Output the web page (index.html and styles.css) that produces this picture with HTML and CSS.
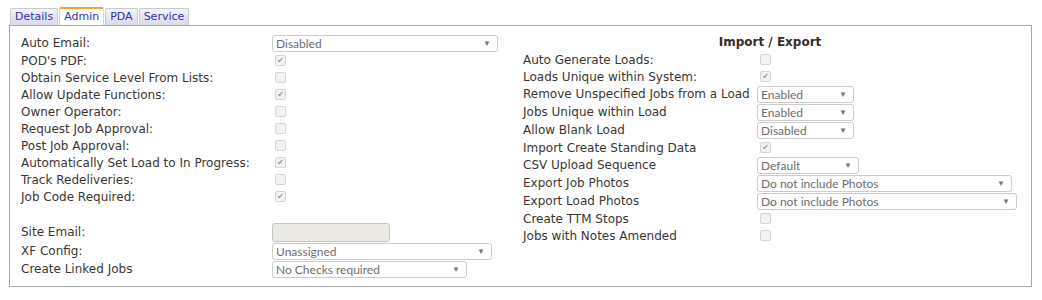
FILE: index.html
```html
<!DOCTYPE html>
<html lang="en">
<head>
  <meta charset="UTF-8" />
  <title>Admin Settings</title>
  <link rel="stylesheet" href="styles.css">
</head>
<body>
  <div class="tabs">
    <div class="tab">Details</div>
    <div class="tab active">Admin</div>
    <div class="tab">PDA</div>
    <div class="tab">Service</div>
  </div>
  <div class="panel">
    <div class="col left">
      <div class="row sel"><span class="label">Auto Email:</span><div class="select w224">Disabled<span class="arrow">&#9660;</span></div></div>
      <div class="row"><span class="label">POD's PDF:</span><span class="check on">&#10004;</span></div>
      <div class="row"><span class="label">Obtain Service Level From Lists:</span><span class="check"></span></div>
      <div class="row"><span class="label">Allow Update Functions:</span><span class="check on">&#10004;</span></div>
      <div class="row"><span class="label">Owner Operator:</span><span class="check"></span></div>
      <div class="row"><span class="label">Request Job Approval:</span><span class="check"></span></div>
      <div class="row"><span class="label">Post Job Approval:</span><span class="check"></span></div>
      <div class="row"><span class="label">Automatically Set Load to In Progress:</span><span class="check on">&#10004;</span></div>
      <div class="row"><span class="label">Track Redeliveries:</span><span class="check"></span></div>
      <div class="row"><span class="label">Job Code Required:</span><span class="check on">&#10004;</span></div>
      <div class="row"></div>
      <div class="row field"><span class="label">Site Email:</span><div class="textbox"></div></div>
      <div class="row sel"><span class="label">XF Config:</span><div class="select w218">Unassigned<span class="arrow">&#9660;</span></div></div>
      <div class="row sel"><span class="label">Create Linked Jobs</span><div class="select w193">No Checks required<span class="arrow">&#9660;</span></div></div>
    </div>
    <div class="col right">
      <h3 class="heading">Import / Export</h3>
      <div class="row"><span class="label">Auto Generate Loads:</span><span class="check"></span></div>
      <div class="row"><span class="label">Loads Unique within System:</span><span class="check on">&#10004;</span></div>
      <div class="row sel"><span class="label">Remove Unspecified Jobs from a Load</span><div class="select w95">Enabled<span class="arrow">&#9660;</span></div></div>
      <div class="row sel"><span class="label">Jobs Unique within Load</span><div class="select w95">Enabled<span class="arrow">&#9660;</span></div></div>
      <div class="row sel"><span class="label">Allow Blank Load</span><div class="select w95">Disabled<span class="arrow">&#9660;</span></div></div>
      <div class="row"><span class="label">Import Create Standing Data</span><span class="check on">&#10004;</span></div>
      <div class="row sel"><span class="label">CSV Upload Sequence</span><div class="select w100">Default<span class="arrow">&#9660;</span></div></div>
      <div class="row sel"><span class="label">Export Job Photos</span><div class="select w253">Do not include Photos<span class="arrow">&#9660;</span></div></div>
      <div class="row sel"><span class="label">Export Load Photos</span><div class="select w259">Do not include Photos<span class="arrow">&#9660;</span></div></div>
      <div class="row"><span class="label">Create TTM Stops</span><span class="check"></span></div>
      <div class="row"><span class="label">Jobs with Notes Amended</span><span class="check"></span></div>
    </div>
  </div>
</body>
</html>
```

FILE: styles.css
```css
body {
  margin: 0;
  padding: 7px 10px 0 9px;
  font-family: "DejaVu Sans", Verdana, sans-serif;
  font-size: 12px;
  color: #3a3632;
  background: #ffffff;
}

.tabs {
  display: flex;
  padding-left: 1px;
  height: 18px;
  align-items: flex-end;
}

.tab {
  height: 16px;
  line-height: 16px;
  padding: 0 4px;
  margin-right: 1px;
  border: 1px solid #c9c9d6;
  border-bottom: none;
  border-radius: 2px 2px 0 0;
  background: linear-gradient(#f4f4fa, #d9d9ea);
  color: #3030b8;
  font-size: 11px;
}

.tab.active {
  height: 16px;
  background: #ffffff;
  border-top: 2px solid #f0a830;
  border-color: #d6d6d6;
  border-top-color: #f0a830;
}

.panel {
  display: flex;
  border: 1px solid #a8a8a8;
  height: 262px;
  padding: 8px 0 0 11px;
  box-sizing: border-box;
  width: 1023px;
}

.col {
  display: flex;
  flex-direction: column;
}

.left {
  width: 502px;
}

.right {
  width: 494px;
}

.left .label {
  width: 251px;
}

.right .label {
  width: 234px;
}

.row {
  display: flex;
  align-items: center;
  height: 17px;
}

.row.sel {
  height: 18px;
}

.row.field {
  height: 20px;
}

.label {
  flex: none;
  white-space: nowrap;
}

.heading {
  margin: 0;
  height: 17px;
  line-height: 17px;
  text-align: center;
  font-size: 12px;
  color: #3a2a2a;
}

.check {
  width: 9px;
  height: 9px;
  margin-left: 3px;
  border: 1px solid #d6d6d6;
  border-radius: 2px;
  background: #f2f2f2;
  color: #9a9a9a;
  font-size: 8px;
  line-height: 9px;
  text-align: center;
}

.select {
  position: relative;
  height: 15px;
  line-height: 15px;
  padding-left: 3px;
  border: 1px solid #cccccc;
  border-radius: 3px;
  color: #6e6e6e;
  font-family: Lato, "Open Sans", sans-serif;
  font-size: 12px;
  box-sizing: content-box;
}

.arrow {
  position: absolute;
  right: 6px;
  top: 0;
  font-size: 8px;
  color: #777777;
}

.w224 { width: 221px; }
.w218 { width: 215px; }
.w193 { width: 190px; }
.w95 { width: 92px; }
.w100 { width: 97px; }
.w253 { width: 250px; }
.w259 { width: 256px; }

.textbox {
  width: 116px;
  height: 17px;
  border: 1px solid #c6c6c0;
  border-radius: 3px;
  background: #ebe9e3;
}
```
